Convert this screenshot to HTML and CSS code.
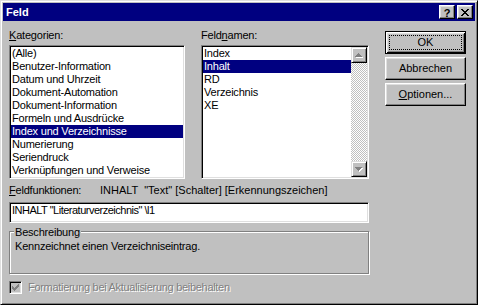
FILE: index.html
```html
<!DOCTYPE html>
<html lang="de">

<head>
	<meta charset="UTF-8">
	<title>Feld</title>
	<link rel="stylesheet" href="styles.css">
</head>

<body>
	<div class="window">
		<!--Titelleiste-->
		<div class="titlebar">
			<span class="titlebar__title">Feld</span>
			<button class="titlebar__btn titlebar__btn--help">?</button>
			<button class="titlebar__btn">
				<svg width="8" height="7" viewBox="0 0 8 7" shape-rendering="crispEdges">
					<path d="M0 0h2v1H0zM6 0h2v1H6zM1 1h2v1H1zM5 1h2v1H5zM2 2h4v1H2zM3 3h2v1H3zM2 4h4v1H2zM1 5h2v1H1zM5 5h2v1H5zM0 6h2v1H0zM6 6h2v1H6z" fill="#000" />
				</svg>
			</button>
		</div>

		<div class="dialog">
			<div class="dialog__top">
				<!--Kategorien-->
				<div class="col col--cat">
					<div class="label"><u>K</u>ategorien:</div>
					<ul class="listbox">
						<li>(Alle)</li>
						<li>Benutzer-Information</li>
						<li>Datum und Uhrzeit</li>
						<li>Dokument-Automation</li>
						<li>Dokument-Information</li>
						<li>Formeln und Ausdrücke</li>
						<li class="selected">Index und Verzeichnisse</li>
						<li>Numerierung</li>
						<li>Seriendruck</li>
						<li>Verknüpfungen und Verweise</li>
					</ul>
				</div>
				<!--Feldnamen-->
				<div class="col col--names">
					<div class="label">Feld<u>n</u>amen:</div>
					<div class="listbox listbox--scroll">
						<ul class="listbox__items">
							<li>Index</li>
							<li class="selected">Inhalt</li>
							<li>RD</li>
							<li>Verzeichnis</li>
							<li>XE</li>
						</ul>
						<div class="scrollbar">
							<span class="scrollbar__btn">
								<svg width="8" height="5" viewBox="0 0 8 5" shape-rendering="crispEdges">
									<path d="M4 1h1v1H4zM3 2h3v1H3zM2 3h5v1H2zM1 4h7v1H1z" fill="#fff" />
									<path d="M3 0h1v1H3zM2 1h3v1H2zM1 2h5v1H1zM0 3h7v1H0z" fill="#808080" />
								</svg>
							</span>
							<span class="scrollbar__track"></span>
							<span class="scrollbar__btn">
								<svg width="8" height="5" viewBox="0 0 8 5" shape-rendering="crispEdges">
									<path d="M1 1h7v1H1zM2 2h5v1H2zM3 3h3v1H3zM4 4h1v1H4z" fill="#fff" />
									<path d="M0 0h7v1H0zM1 1h5v1H1zM2 2h3v1H2zM3 3h1v1H3z" fill="#808080" />
								</svg>
							</span>
						</div>
					</div>
				</div>
				<!--Schaltflächen-->
				<div class="buttons">
					<button class="btn btn--default"><span class="btn__focus">OK</span></button>
					<button class="btn">Abbrechen</button>
					<button class="btn"><u>O</u>ptionen...</button>
				</div>
			</div>

			<div class="codes">
				<span class="codes__label"><u>F</u>eldfunktionen:</span>
				<span class="codes__syntax">INHALT  "Text" [Schalter] [Erkennungszeichen]</span>
			</div>
			<div class="edit">INHALT "Literaturverzeichnis" \l1</div>

			<div class="group">
				<div class="group__label">Beschreibung</div>
				<div class="group__text">Kennzeichnet einen Verzeichniseintrag.</div>
			</div>

			<div class="check">
				<span class="check__box">
					<svg width="7" height="7" viewBox="0 0 7 7" shape-rendering="crispEdges">
						<path d="M6 0h1v1H6zM5 1h2v1H5zM0 2h1v1H0zM4 2h3v1H4zM0 3h2v1H0zM3 3h3v1H3zM0 4h5v1H0zM1 5h3v1H1zM2 6h1v1H2z" fill="#808080" />
					</svg>
				</span>
				<span class="check__text">Formatierung bei Aktualisierung beibehalten</span>
			</div>
		</div>
	</div>
</body>

</html>
```

FILE: styles.css
```css
* {
	margin: 0;
	padding: 0;
}

body {
	font: 11px/13px "Liberation Sans", Arial, sans-serif;
	letter-spacing: -0.2px;
	color: #000;
	background: #c0c0c0;
}

u {
	text-decoration: underline;
}

.window {
	width: 478px;
	height: 305px;
	box-sizing: border-box;
	background: #c0c0c0;
	border: solid 1px;
	border-color: #dfdfdf #000 #000 #dfdfdf;
	box-shadow: inset 1px 1px #fff, inset -1px -1px #808080;
	padding: 2px;
}

/* Titelleiste */
.titlebar {
	height: 18px;
	display: flex;
	align-items: center;
	padding: 0 2px 0 3px;
	background: #000080;
	color: #fff;
	font-weight: bold;
	letter-spacing: 0;
}

.titlebar__title {
	flex: 1;
}

.titlebar__btn {
	width: 16px;
	height: 14px;
	margin-left: 2px;
	display: flex;
	align-items: center;
	justify-content: center;
	background: #c0c0c0;
	border: solid 1px;
	border-color: #fff #000 #000 #fff;
	box-shadow: inset -1px -1px #808080, inset 1px 1px #dfdfdf;
	font: bold 11px/12px "Liberation Sans", Arial, sans-serif;
	color: #000;
}

.titlebar__btn--help {
	padding-top: 1px;
}

/* Inhalt */
.dialog {
	padding: 8px 9px 0 6px;
}

.dialog__top {
	display: flex;
}

.col--cat {
	width: 176px;
}

.col--names {
	width: 168px;
	margin-left: 16px;
}

.label {
	height: 13px;
	margin-bottom: 3px;
}

.listbox {
	list-style: none;
	box-sizing: border-box;
	height: 134px;
	padding: 1px;
	background: #fff;
	border: solid 1px;
	border-color: #808080 #fff #fff #808080;
	box-shadow: inset 1px 1px #000, inset -1px -1px #dfdfdf;
}

.listbox li {
	height: 13px;
	padding-left: 1px;
	white-space: nowrap;
	list-style: none;
}

.listbox li.selected {
	background: #000080;
	color: #fff;
}

.listbox--scroll {
	display: flex;
}

.listbox__items {
	flex: 1;
}

.scrollbar {
	width: 16px;
	display: flex;
	flex-direction: column;
}

.scrollbar__btn {
	width: 16px;
	height: 16px;
	box-sizing: border-box;
	display: flex;
	align-items: center;
	justify-content: center;
	background: #c0c0c0;
	border: solid 1px;
	border-color: #dfdfdf #000 #000 #dfdfdf;
	box-shadow: inset 1px 1px #fff, inset -1px -1px #808080;
}

.scrollbar__track {
	flex: 1;
	background: conic-gradient(#fff 25%, #c0c0c0 0 50%, #fff 0 75%, #c0c0c0 0);
	background-size: 2px 2px;
}

/* Schaltflächen */
.buttons {
	width: 81px;
	margin-left: 16px;
	padding-top: 2px;
}

.btn {
	display: flex;
	align-items: center;
	justify-content: center;
	width: 81px;
	height: 23px;
	margin-bottom: 3px;
	background: #c0c0c0;
	border: solid 1px;
	border-color: #fff #000 #000 #fff;
	box-shadow: inset -1px -1px #808080, inset 1px 1px #dfdfdf;
	font: inherit;
	color: #000;
}

.btn--default {
	padding: 3px;
	border-color: #000;
	box-shadow: inset 1px 1px #fff, inset -1px -1px #000, inset 2px 2px #dfdfdf, inset -2px -2px #808080;
}

.btn__focus {
	flex: 1;
	align-self: stretch;
	display: flex;
	align-items: center;
	justify-content: center;
	border: dotted 1px #000;
}

/* Feldfunktionen */
.codes {
	display: flex;
	margin-top: 5px;
	height: 13px;
}

.codes__label {
	width: 91px;
}

.codes__syntax {
	white-space: pre;
	letter-spacing: 0;
}

.edit {
	width: 360px;
	height: 21px;
	box-sizing: border-box;
	margin-top: 5px;
	padding: 1px 2px;
	background: #fff;
	border: solid 1px;
	border-color: #808080 #fff #fff #808080;
	box-shadow: inset 1px 1px #000, inset -1px -1px #dfdfdf;
	white-space: pre;
	letter-spacing: -0.5px;
}

/* Beschreibung */
.group {
	width: 360px;
	height: 43px;
	box-sizing: border-box;
	margin-top: 8px;
	border: solid 1px #808080;
	box-shadow: 1px 1px #fff, inset 1px 1px #fff;
}

.group__label {
	width: max-content;
	margin: -6px 0 0 4px;
	padding: 0 1px;
	background: #c0c0c0;
}

.group__text {
	margin: 1px 0 0 5px;
}

/* Kontrollkästchen */
.check {
	display: flex;
	align-items: center;
	margin-top: 7px;
}

.check__box {
	width: 13px;
	height: 13px;
	box-sizing: border-box;
	display: flex;
	align-items: center;
	justify-content: center;
	background: #c0c0c0;
	border: solid 1px;
	border-color: #808080 #fff #fff #808080;
	box-shadow: inset 1px 1px #000, inset -1px -1px #dfdfdf;
}

.check__text {
	margin-left: 6px;
	color: #808080;
	text-shadow: 1px 1px 0 #fff;
	letter-spacing: -0.3px;
}
```
